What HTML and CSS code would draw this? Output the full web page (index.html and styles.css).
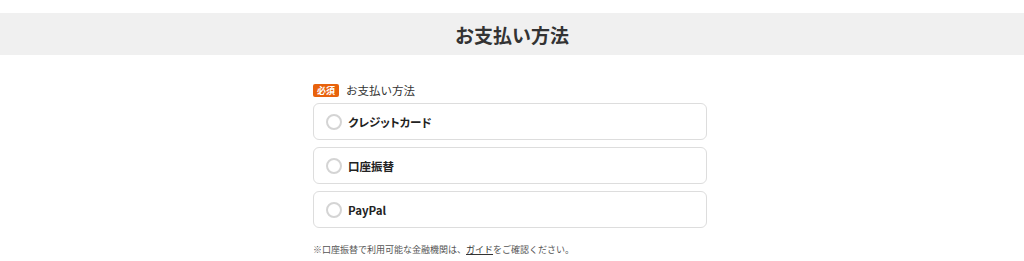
FILE: index.html
```html
<!DOCTYPE html>
<html lang="ja">
<head>
    <meta charset="UTF-8">
    <meta name="viewport" content="width=device-width, initial-scale=1.0">
    <title>お支払い方法</title>
    <link rel="stylesheet" href="styles.css">
</head>
<body>
    <div class="page-head">
        <h1>お支払い方法</h1>
    </div>

    <div class="form">
        <div class="field-label">
            <span class="required">必須</span>
            <span>お支払い方法</span>
        </div>
        <label class="option">
            <span class="radio"></span>
            <span>クレジットカード</span>
        </label>
        <label class="option">
            <span class="radio"></span>
            <span>口座振替</span>
        </label>
        <label class="option">
            <span class="radio"></span>
            <span>PayPal</span>
        </label>
        <p class="note">※口座振替で利用可能な金融機関は、<a href="#">ガイド</a>をご確認ください。</p>
    </div>
</body>
</html>
```

FILE: styles.css
```css
body {
    margin: 0;
    font-family: "Noto Sans CJK JP", "Noto Sans", sans-serif;
    color: #333;
    background: #fff;
}
.page-head {
    margin-top: 13px;
    height: 42px;
    background: #f0f0f0;
    display: flex;
    align-items: center;
    justify-content: center;
}
.page-head h1 {
    margin: 0;
    font-size: 19px;
    font-weight: bold;
    color: #333;
    line-height: 1;
}
.form {
    width: 394px;
    margin: 27px auto 0;
    padding-right: 4px;
}
.field-label {
    display: flex;
    align-items: center;
    gap: 7px;
    font-size: 11.5px;
    line-height: 16px;
    margin-bottom: 5px;
}
.required {
    background: #e8620c;
    color: #fff;
    font-size: 9px;
    font-weight: bold;
    padding: 0 4px;
    line-height: 13px;
    border-radius: 2px;
}
.option {
    display: flex;
    align-items: center;
    gap: 6px;
    height: 37px;
    box-sizing: border-box;
    padding-left: 12px;
    border: 1px solid #ddd;
    border-radius: 6px;
    margin-bottom: 7px;
    font-size: 11.5px;
    font-weight: bold;
    font-feature-settings: "palt";
    color: #222;
}
.radio {
    width: 12px;
    height: 12px;
    border: 2px solid #d4d4d4;
    border-radius: 50%;
    background: #fff;
}
.note {
    margin: 15px 0 0;
    font-size: 9px;
    color: #555;
}
.note a {
    color: #333;
    text-decoration: underline;
}
```
